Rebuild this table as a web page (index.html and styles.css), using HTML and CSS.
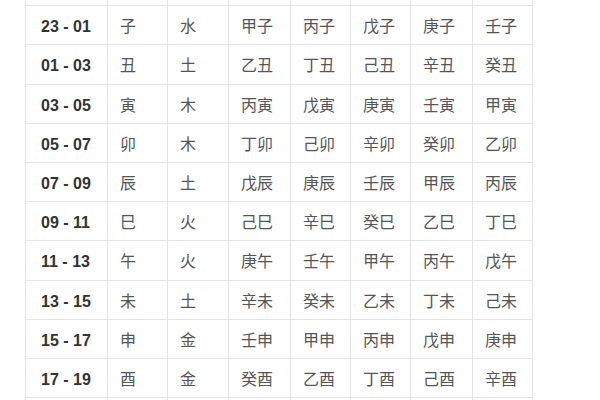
FILE: index.html
```html
<!DOCTYPE html>
<html lang="zh">
<head>
<meta charset="utf-8">
<link rel="stylesheet" href="styles.css">
</head>
<body>
<table class="tbl">
<colgroup>
<col class="c-time"><col class="c-a"><col class="c-b"><col class="c-c"><col class="c-d"><col class="c-e"><col class="c-f"><col class="c-g">
</colgroup>
<tbody>
<tr class="head"><td></td><td></td><td></td><td></td><td></td><td></td><td></td><td></td></tr>
<tr><td class="t">23 - 01</td><td>子</td><td>水</td><td>甲子</td><td>丙子</td><td>戊子</td><td>庚子</td><td>壬子</td></tr>
<tr><td class="t">01 - 03</td><td>丑</td><td>土</td><td>乙丑</td><td>丁丑</td><td>己丑</td><td>辛丑</td><td>癸丑</td></tr>
<tr><td class="t">03 - 05</td><td>寅</td><td>木</td><td>丙寅</td><td>戊寅</td><td>庚寅</td><td>壬寅</td><td>甲寅</td></tr>
<tr><td class="t">05 - 07</td><td>卯</td><td>木</td><td>丁卯</td><td>己卯</td><td>辛卯</td><td>癸卯</td><td>乙卯</td></tr>
<tr><td class="t">07 - 09</td><td>辰</td><td>土</td><td>戊辰</td><td>庚辰</td><td>壬辰</td><td>甲辰</td><td>丙辰</td></tr>
<tr><td class="t">09 - 11</td><td>巳</td><td>火</td><td>己巳</td><td>辛巳</td><td>癸巳</td><td>乙巳</td><td>丁巳</td></tr>
<tr><td class="t">11 - 13</td><td>午</td><td>火</td><td>庚午</td><td>壬午</td><td>甲午</td><td>丙午</td><td>戊午</td></tr>
<tr><td class="t">13 - 15</td><td>未</td><td>土</td><td>辛未</td><td>癸未</td><td>乙未</td><td>丁未</td><td>己未</td></tr>
<tr><td class="t">15 - 17</td><td>申</td><td>金</td><td>壬申</td><td>甲申</td><td>丙申</td><td>戊申</td><td>庚申</td></tr>
<tr><td class="t">17 - 19</td><td>酉</td><td>金</td><td>癸酉</td><td>乙酉</td><td>丁酉</td><td>己酉</td><td>辛酉</td></tr>
<tr class="tail"><td></td><td></td><td></td><td></td><td></td><td></td><td></td><td></td></tr>
</tbody>
</table>
</body>
</html>
```
FILE: styles.css
```css
html, body {
  margin: 0;
  padding: 0;
  background: #ffffff;
  overflow: hidden;
}
.tbl {
  border-collapse: collapse;
  table-layout: fixed;
  width: 508px;
  margin-left: 25px;
  margin-top: -34px;
  font-family: "Noto Sans CJK SC", "Liberation Sans", sans-serif;
  font-size: 16px;
  color: #555555;
}
.c-time { width: 82px; }
.c-a { width: 60px; }
.c-b { width: 61px; }
.c-c { width: 62px; }
.c-d { width: 60px; }
.c-e { width: 60px; }
.c-f { width: 62px; }
.c-g { width: 60px; }
.tbl td {
  border: 1px solid #e4e4e4;
  height: 39.2px;
  padding: 0 0 0 12px;
  box-sizing: border-box;
  text-align: left;
  vertical-align: middle;
  line-height: 20px;
  white-space: nowrap;
}
.tbl td.t {
  font-family: "Liberation Sans", Arial, sans-serif;
  font-weight: bold;
  font-size: 16px;
  color: #333333;
  padding-left: 15px;
  padding-top: 4px;
}
```
